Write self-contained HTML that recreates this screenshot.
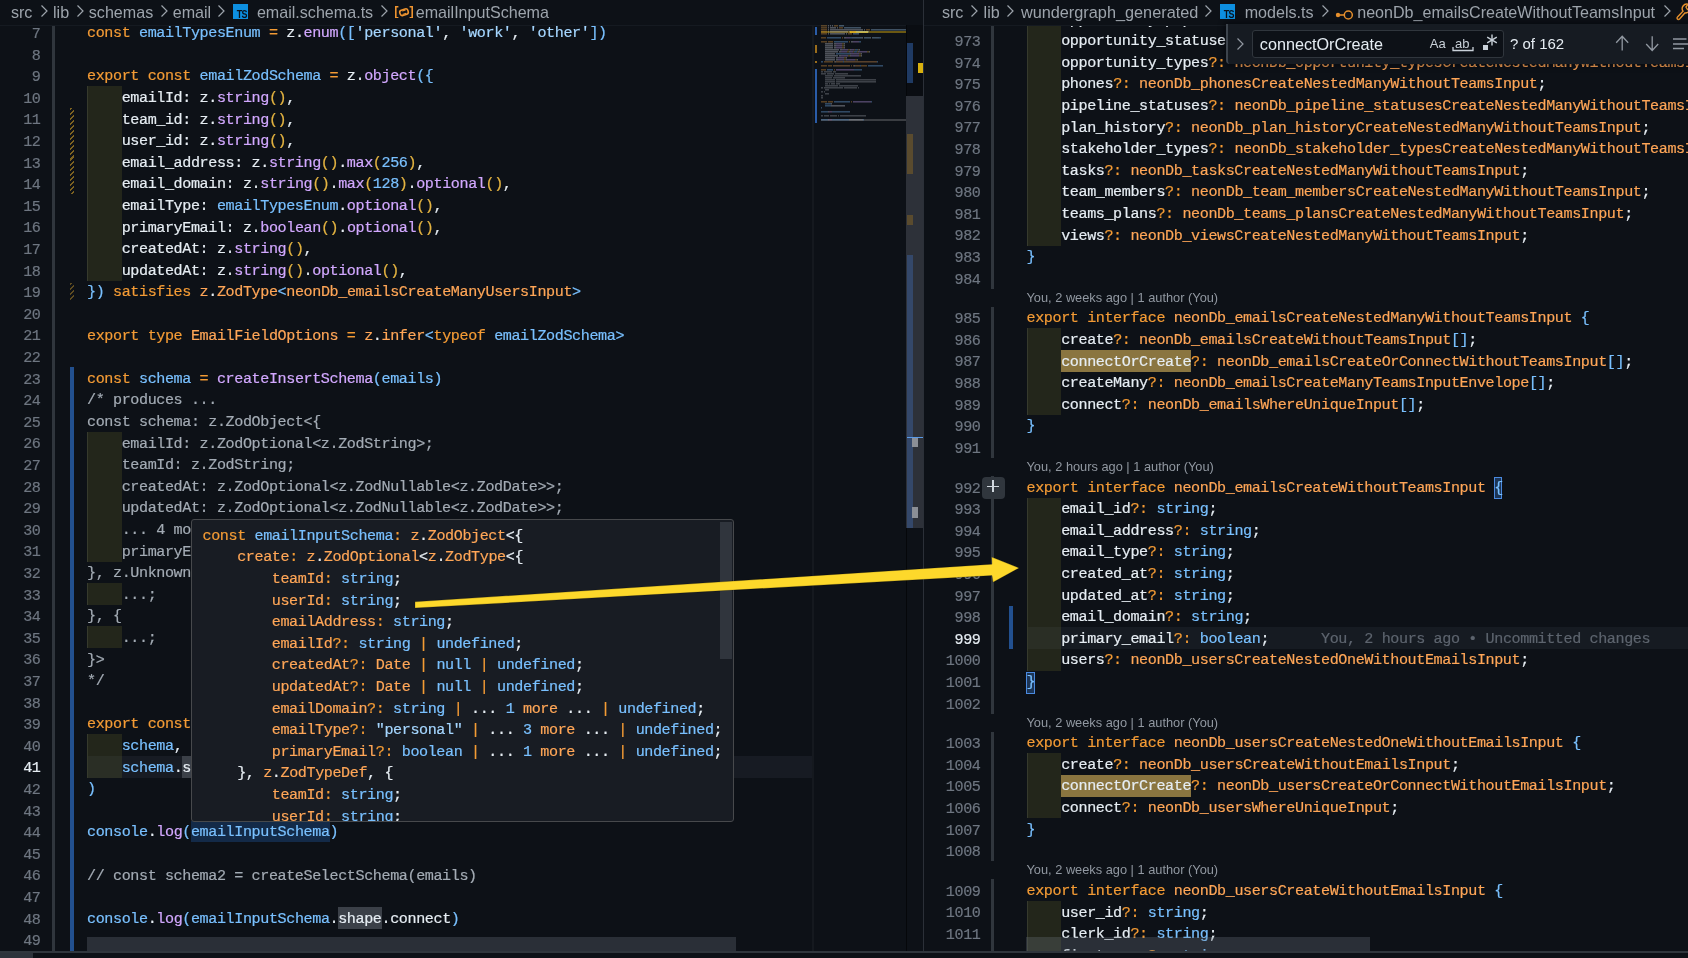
<!DOCTYPE html><html><head><meta charset="utf-8"><style>
*{margin:0;padding:0;box-sizing:border-box}
html,body{width:1688px;height:958px;overflow:hidden;background:#0d1117}
body{position:relative;font-family:"Liberation Mono",monospace}
.ln{position:absolute;white-space:pre;font-family:"Liberation Mono",monospace;font-size:15.1px;letter-spacing:-0.3964px;line-height:21.6px;height:21.6px;-webkit-text-stroke:0.2px currentColor}
.K{color:#f39b35} .T{color:#ffa657} .V{color:#79c0ff} .F{color:#d2a8ff}
.S{color:#a5d6ff} .Y{color:#e3b341} .D{color:#e6edf3} .C{color:#a3abb4} .G{color:#5d646e}
.bc{position:absolute;top:0;height:25px;line-height:25px;font-family:"Liberation Sans",sans-serif;font-size:16.1px;color:#9da4ac;white-space:pre}
.pane{position:absolute;overflow:hidden}
#root{position:absolute;left:0;top:0;width:1688px;height:958px;overflow:hidden;will-change:transform}
</style></head><body><div id="root">
<div class="pane" style="left:0;top:25px;width:923px;height:926px">
<div style="position:absolute;left:87.00px;top:731.00px;width:726.00px;height:21.60px;background:#171b23;"></div>
<div style="position:absolute;left:87.00px;top:61.00px;width:34.66px;height:195.00px;background:#23261b;border-left:1px solid #363a2d"></div>
<div style="position:absolute;left:87.00px;top:407.00px;width:34.66px;height:130.00px;background:#23261b;border-left:1px solid #363a2d"></div>
<div style="position:absolute;left:87.00px;top:558.00px;width:34.66px;height:22.00px;background:#23261b;border-left:1px solid #363a2d"></div>
<div style="position:absolute;left:87.00px;top:601.00px;width:34.66px;height:22.00px;background:#23261b;border-left:1px solid #363a2d"></div>
<div style="position:absolute;left:87.00px;top:709.00px;width:34.66px;height:44.00px;background:#23261b;border-left:1px solid #363a2d"></div>
<div style="position:absolute;left:88.00px;top:731.00px;width:33.66px;height:22.00px;background:rgba(110,118,129,0.10);"></div>
<div style="position:absolute;left:190.98px;top:795.80px;width:138.64px;height:21.60px;background:#132a48;"></div>
<div style="position:absolute;left:338.28px;top:882.20px;width:43.32px;height:21.60px;background:#3b4048;"></div>
<div style="position:absolute;left:182.31px;top:731.00px;width:8.66px;height:21.60px;background:#3b4048;"></div>
<div style="position:absolute;left:52.00px;top:0.00px;width:3.00px;height:926.00px;background:#30363d;"></div>
<div style="position:absolute;left:812.00px;top:0.00px;width:2.00px;height:926.00px;background:#15191f;"></div>
<div style="position:absolute;left:70px;top:83.00px;width:4px;height:86.40px;background:repeating-linear-gradient(135deg,#7d6220 0 1.5px,transparent 1.5px 3.6px)"></div>
<div style="position:absolute;left:70px;top:257.80px;width:4px;height:17.60px;background:repeating-linear-gradient(135deg,#5f4c20 0 1.5px,transparent 1.5px 3.6px)"></div>
<div style="position:absolute;left:70.00px;top:342.20px;width:4.00px;height:583.80px;background:#22508f;"></div>
<div class="ln" style="left:-19.50px;width:60px;text-align:right;top:-1.00px;color:#6e7681">7</div>
<div class="ln" style="left:87.00px;top:-1.90px;"><span class="K">const </span><span class="V">emailTypesEnum </span><span class="K">= </span><span class="D">z.</span><span class="F">enum</span><span class="V">([</span><span class="S">&#x27;personal&#x27;</span><span class="D">, </span><span class="S">&#x27;work&#x27;</span><span class="D">, </span><span class="S">&#x27;other&#x27;</span><span class="V">])</span></div>
<div class="ln" style="left:-19.50px;width:60px;text-align:right;top:20.60px;color:#6e7681">8</div>
<div class="ln" style="left:87.00px;top:19.70px;"></div>
<div class="ln" style="left:-19.50px;width:60px;text-align:right;top:42.20px;color:#6e7681">9</div>
<div class="ln" style="left:87.00px;top:41.30px;"><span class="K">export const </span><span class="V">emailZodSchema </span><span class="K">= </span><span class="D">z.</span><span class="F">object</span><span class="V">({</span></div>
<div class="ln" style="left:-19.50px;width:60px;text-align:right;top:63.80px;color:#6e7681">10</div>
<div class="ln" style="left:87.00px;top:62.90px;"><span class="D">    emailId: z.</span><span class="F">string</span><span class="Y">()</span><span class="D">,</span></div>
<div class="ln" style="left:-19.50px;width:60px;text-align:right;top:85.40px;color:#6e7681">11</div>
<div class="ln" style="left:87.00px;top:84.50px;"><span class="D">    team_id: z.</span><span class="F">string</span><span class="Y">()</span><span class="D">,</span></div>
<div class="ln" style="left:-19.50px;width:60px;text-align:right;top:107.00px;color:#6e7681">12</div>
<div class="ln" style="left:87.00px;top:106.10px;"><span class="D">    user_id: z.</span><span class="F">string</span><span class="Y">()</span><span class="D">,</span></div>
<div class="ln" style="left:-19.50px;width:60px;text-align:right;top:128.60px;color:#6e7681">13</div>
<div class="ln" style="left:87.00px;top:127.70px;"><span class="D">    email_address: z.</span><span class="F">string</span><span class="Y">()</span><span class="D">.</span><span class="F">max</span><span class="Y">(</span><span class="V">256</span><span class="Y">)</span><span class="D">,</span></div>
<div class="ln" style="left:-19.50px;width:60px;text-align:right;top:150.20px;color:#6e7681">14</div>
<div class="ln" style="left:87.00px;top:149.30px;"><span class="D">    email_domain: z.</span><span class="F">string</span><span class="Y">()</span><span class="D">.</span><span class="F">max</span><span class="Y">(</span><span class="V">128</span><span class="Y">)</span><span class="D">.</span><span class="F">optional</span><span class="Y">()</span><span class="D">,</span></div>
<div class="ln" style="left:-19.50px;width:60px;text-align:right;top:171.80px;color:#6e7681">15</div>
<div class="ln" style="left:87.00px;top:170.90px;"><span class="D">    emailType: </span><span class="V">emailTypesEnum</span><span class="D">.</span><span class="F">optional</span><span class="Y">()</span><span class="D">,</span></div>
<div class="ln" style="left:-19.50px;width:60px;text-align:right;top:193.40px;color:#6e7681">16</div>
<div class="ln" style="left:87.00px;top:192.50px;"><span class="D">    primaryEmail: z.</span><span class="F">boolean</span><span class="Y">()</span><span class="D">.</span><span class="F">optional</span><span class="Y">()</span><span class="D">,</span></div>
<div class="ln" style="left:-19.50px;width:60px;text-align:right;top:215.00px;color:#6e7681">17</div>
<div class="ln" style="left:87.00px;top:214.10px;"><span class="D">    createdAt: z.</span><span class="F">string</span><span class="Y">()</span><span class="D">,</span></div>
<div class="ln" style="left:-19.50px;width:60px;text-align:right;top:236.60px;color:#6e7681">18</div>
<div class="ln" style="left:87.00px;top:235.70px;"><span class="D">    updatedAt: z.</span><span class="F">string</span><span class="Y">()</span><span class="D">.</span><span class="F">optional</span><span class="Y">()</span><span class="D">,</span></div>
<div class="ln" style="left:-19.50px;width:60px;text-align:right;top:258.20px;color:#6e7681">19</div>
<div class="ln" style="left:87.00px;top:257.30px;"><span class="V">}) </span><span class="K">satisfies </span><span class="T">z</span><span class="D">.</span><span class="T">ZodType</span><span class="V">&lt;</span><span class="T">neonDb_emailsCreateManyUsersInput</span><span class="V">&gt;</span></div>
<div class="ln" style="left:-19.50px;width:60px;text-align:right;top:279.80px;color:#6e7681">20</div>
<div class="ln" style="left:87.00px;top:278.90px;"></div>
<div class="ln" style="left:-19.50px;width:60px;text-align:right;top:301.40px;color:#6e7681">21</div>
<div class="ln" style="left:87.00px;top:300.50px;"><span class="K">export type </span><span class="T">EmailFieldOptions </span><span class="K">= </span><span class="T">z</span><span class="D">.</span><span class="T">infer</span><span class="V">&lt;</span><span class="K">typeof </span><span class="V">emailZodSchema&gt;</span></div>
<div class="ln" style="left:-19.50px;width:60px;text-align:right;top:323.00px;color:#6e7681">22</div>
<div class="ln" style="left:87.00px;top:322.10px;"></div>
<div class="ln" style="left:-19.50px;width:60px;text-align:right;top:344.60px;color:#6e7681">23</div>
<div class="ln" style="left:87.00px;top:343.70px;"><span class="K">const </span><span class="V">schema </span><span class="K">= </span><span class="F">createInsertSchema</span><span class="V">(emails)</span></div>
<div class="ln" style="left:-19.50px;width:60px;text-align:right;top:366.20px;color:#6e7681">24</div>
<div class="ln" style="left:87.00px;top:365.30px;"><span class="C">/* produces ...</span></div>
<div class="ln" style="left:-19.50px;width:60px;text-align:right;top:387.80px;color:#6e7681">25</div>
<div class="ln" style="left:87.00px;top:386.90px;"><span class="C">const schema: z.ZodObject&lt;{</span></div>
<div class="ln" style="left:-19.50px;width:60px;text-align:right;top:409.40px;color:#6e7681">26</div>
<div class="ln" style="left:87.00px;top:408.50px;"><span class="C">    emailId: z.ZodOptional&lt;z.ZodString&gt;;</span></div>
<div class="ln" style="left:-19.50px;width:60px;text-align:right;top:431.00px;color:#6e7681">27</div>
<div class="ln" style="left:87.00px;top:430.10px;"><span class="C">    teamId: z.ZodString;</span></div>
<div class="ln" style="left:-19.50px;width:60px;text-align:right;top:452.60px;color:#6e7681">28</div>
<div class="ln" style="left:87.00px;top:451.70px;"><span class="C">    createdAt: z.ZodOptional&lt;z.ZodNullable&lt;z.ZodDate&gt;&gt;;</span></div>
<div class="ln" style="left:-19.50px;width:60px;text-align:right;top:474.20px;color:#6e7681">29</div>
<div class="ln" style="left:87.00px;top:473.30px;"><span class="C">    updatedAt: z.ZodOptional&lt;z.ZodNullable&lt;z.ZodDate&gt;&gt;;</span></div>
<div class="ln" style="left:-19.50px;width:60px;text-align:right;top:495.80px;color:#6e7681">30</div>
<div class="ln" style="left:87.00px;top:494.90px;"><span class="C">    ... 4 more ...;</span></div>
<div class="ln" style="left:-19.50px;width:60px;text-align:right;top:517.40px;color:#6e7681">31</div>
<div class="ln" style="left:87.00px;top:516.50px;"><span class="C">    primaryEmail: z.ZodOptional&lt;z.ZodBoolean&gt;;</span></div>
<div class="ln" style="left:-19.50px;width:60px;text-align:right;top:539.00px;color:#6e7681">32</div>
<div class="ln" style="left:87.00px;top:538.10px;"><span class="C">}, z.UnknownKeysParam, z.ZodTypeAny, {</span></div>
<div class="ln" style="left:-19.50px;width:60px;text-align:right;top:560.60px;color:#6e7681">33</div>
<div class="ln" style="left:87.00px;top:559.70px;"><span class="C">    ...;</span></div>
<div class="ln" style="left:-19.50px;width:60px;text-align:right;top:582.20px;color:#6e7681">34</div>
<div class="ln" style="left:87.00px;top:581.30px;"><span class="C">}, {</span></div>
<div class="ln" style="left:-19.50px;width:60px;text-align:right;top:603.80px;color:#6e7681">35</div>
<div class="ln" style="left:87.00px;top:602.90px;"><span class="C">    ...;</span></div>
<div class="ln" style="left:-19.50px;width:60px;text-align:right;top:625.40px;color:#6e7681">36</div>
<div class="ln" style="left:87.00px;top:624.50px;"><span class="C">}&gt;</span></div>
<div class="ln" style="left:-19.50px;width:60px;text-align:right;top:647.00px;color:#6e7681">37</div>
<div class="ln" style="left:87.00px;top:646.10px;"><span class="C">*/</span></div>
<div class="ln" style="left:-19.50px;width:60px;text-align:right;top:668.60px;color:#6e7681">38</div>
<div class="ln" style="left:87.00px;top:667.70px;"></div>
<div class="ln" style="left:-19.50px;width:60px;text-align:right;top:690.20px;color:#6e7681">39</div>
<div class="ln" style="left:87.00px;top:689.30px;"><span class="K">export const </span><span class="V">emailInputSchema </span><span class="K">= </span><span class="F">createInsertSchema</span><span class="V">(</span></div>
<div class="ln" style="left:-19.50px;width:60px;text-align:right;top:711.80px;color:#6e7681">40</div>
<div class="ln" style="left:87.00px;top:710.90px;"><span class="D">    </span><span class="V">schema</span><span class="D">,</span></div>
<div class="ln" style="left:-19.50px;width:60px;text-align:right;top:733.40px;color:#e6edf3">41</div>
<div class="ln" style="left:87.00px;top:732.50px;"><span class="D">    </span><span class="V">schema</span><span class="D">.shape</span></div>
<div class="ln" style="left:-19.50px;width:60px;text-align:right;top:755.00px;color:#6e7681">42</div>
<div class="ln" style="left:87.00px;top:754.10px;"><span class="V">)</span></div>
<div class="ln" style="left:-19.50px;width:60px;text-align:right;top:776.60px;color:#6e7681">43</div>
<div class="ln" style="left:87.00px;top:775.70px;"></div>
<div class="ln" style="left:-19.50px;width:60px;text-align:right;top:798.20px;color:#6e7681">44</div>
<div class="ln" style="left:87.00px;top:797.30px;"><span class="V">console</span><span class="D">.</span><span class="F">log</span><span class="V">(emailInputSchema)</span></div>
<div class="ln" style="left:-19.50px;width:60px;text-align:right;top:819.80px;color:#6e7681">45</div>
<div class="ln" style="left:87.00px;top:818.90px;"></div>
<div class="ln" style="left:-19.50px;width:60px;text-align:right;top:841.40px;color:#6e7681">46</div>
<div class="ln" style="left:87.00px;top:840.50px;"><span class="C">// const schema2 = createSelectSchema(emails)</span></div>
<div class="ln" style="left:-19.50px;width:60px;text-align:right;top:863.00px;color:#6e7681">47</div>
<div class="ln" style="left:87.00px;top:862.10px;"></div>
<div class="ln" style="left:-19.50px;width:60px;text-align:right;top:884.60px;color:#6e7681">48</div>
<div class="ln" style="left:87.00px;top:883.70px;"><span class="V">console</span><span class="D">.</span><span class="F">log</span><span class="V">(emailInputSchema</span><span class="D">.shape.connect</span><span class="V">)</span></div>
<div class="ln" style="left:-19.50px;width:60px;text-align:right;top:906.20px;color:#6e7681">49</div>
<div class="ln" style="left:87.00px;top:905.30px;"></div>
<div style="position:absolute;left:87.00px;top:912.00px;width:649.00px;height:14.00px;background:rgba(110,118,129,0.3);"></div>
</div>
<div class="pane" style="left:924px;top:25px;width:764px;height:926px">
<div style="position:absolute;left:102.50px;top:602.30px;width:661.50px;height:21.60px;background:#161b22;"></div>
<div style="position:absolute;left:102.50px;top:-17.00px;width:34.66px;height:238.00px;background:#23261b;border-left:1px solid #363a2d"></div>
<div style="position:absolute;left:102.50px;top:303.00px;width:34.66px;height:87.00px;background:#23261b;border-left:1px solid #363a2d"></div>
<div style="position:absolute;left:102.50px;top:473.00px;width:34.66px;height:173.00px;background:#23261b;border-left:1px solid #363a2d"></div>
<div style="position:absolute;left:102.50px;top:728.00px;width:34.66px;height:65.00px;background:#23261b;border-left:1px solid #363a2d"></div>
<div style="position:absolute;left:102.50px;top:876.00px;width:34.66px;height:65.00px;background:#23261b;border-left:1px solid #363a2d"></div>
<div style="position:absolute;left:103.50px;top:602.00px;width:33.66px;height:22.00px;background:rgba(110,118,129,0.10);"></div>
<div style="position:absolute;left:137.16px;top:325.05px;width:129.97px;height:21.60px;background:#8a7540;"></div>
<div style="position:absolute;left:137.16px;top:749.95px;width:129.97px;height:21.60px;background:#8a7540;"></div>
<div style="position:absolute;left:569.91px;top:452.10px;width:8.5px;height:22px;border:1px solid #4a8ae0;background:#1c3556"></div>
<div style="position:absolute;left:102.00px;top:646.50px;width:8.5px;height:22px;border:1px solid #4a8ae0;background:#1c3556"></div>
<div style="position:absolute;left:67.00px;top:0.00px;width:3.00px;height:263.80px;background:#30363d;"></div>
<div style="position:absolute;left:67.00px;top:281.85px;width:3.00px;height:151.20px;background:#30363d;"></div>
<div style="position:absolute;left:67.00px;top:451.10px;width:3.00px;height:237.60px;background:#30363d;"></div>
<div style="position:absolute;left:67.00px;top:706.75px;width:3.00px;height:129.60px;background:#30363d;"></div>
<div style="position:absolute;left:67.00px;top:854.40px;width:3.00px;height:71.60px;background:#30363d;"></div>
<div style="position:absolute;left:85.00px;top:580.70px;width:4.00px;height:43.20px;background:#22508f;"></div>
<div style="position:absolute;left:58px;top:452px;width:23px;height:22px;background:#30363d;border-radius:4px"></div>
<div style="position:absolute;left:62.89999999999998px;top:460.5px;width:12.5px;height:1.4px;background:#d0d7de"></div>
<div style="position:absolute;left:68.39999999999998px;top:455px;width:1.4px;height:12.3px;background:#d0d7de"></div>
<div class="ln" style="left:-3.50px;width:60px;text-align:right;top:-14.60px;color:#6e7681">972</div>
<div class="ln" style="left:102.50px;top:-15.50px;"><span class="D">    opportunity_pipelines</span><span class="K">?: </span><span class="T">neonDb_opportunity_pipelinesCreateNestedManyWithoutTeamsInput</span><span class="D">;</span></div>
<div class="ln" style="left:-3.50px;width:60px;text-align:right;top:7.00px;color:#6e7681">973</div>
<div class="ln" style="left:102.50px;top:6.10px;"><span class="D">    opportunity_statuses</span><span class="K">?: </span><span class="T">neonDb_opportunity_statusesCreateNestedManyWithoutTeamsInput</span><span class="D">;</span></div>
<div class="ln" style="left:-3.50px;width:60px;text-align:right;top:28.60px;color:#6e7681">974</div>
<div class="ln" style="left:102.50px;top:27.70px;"><span class="D">    opportunity_types</span><span class="K">?: </span><span class="T">neonDb_opportunity_typesCreateNestedManyWithoutTeamsInput</span><span class="D">;</span></div>
<div class="ln" style="left:-3.50px;width:60px;text-align:right;top:50.20px;color:#6e7681">975</div>
<div class="ln" style="left:102.50px;top:49.30px;"><span class="D">    phones</span><span class="K">?: </span><span class="T">neonDb_phonesCreateNestedManyWithoutTeamsInput</span><span class="D">;</span></div>
<div class="ln" style="left:-3.50px;width:60px;text-align:right;top:71.80px;color:#6e7681">976</div>
<div class="ln" style="left:102.50px;top:70.90px;"><span class="D">    pipeline_statuses</span><span class="K">?: </span><span class="T">neonDb_pipeline_statusesCreateNestedManyWithoutTeamsInput</span><span class="D">;</span></div>
<div class="ln" style="left:-3.50px;width:60px;text-align:right;top:93.40px;color:#6e7681">977</div>
<div class="ln" style="left:102.50px;top:92.50px;"><span class="D">    plan_history</span><span class="K">?: </span><span class="T">neonDb_plan_historyCreateNestedManyWithoutTeamsInput</span><span class="D">;</span></div>
<div class="ln" style="left:-3.50px;width:60px;text-align:right;top:115.00px;color:#6e7681">978</div>
<div class="ln" style="left:102.50px;top:114.10px;"><span class="D">    stakeholder_types</span><span class="K">?: </span><span class="T">neonDb_stakeholder_typesCreateNestedManyWithoutTeamsInput</span><span class="D">;</span></div>
<div class="ln" style="left:-3.50px;width:60px;text-align:right;top:136.60px;color:#6e7681">979</div>
<div class="ln" style="left:102.50px;top:135.70px;"><span class="D">    tasks</span><span class="K">?: </span><span class="T">neonDb_tasksCreateNestedManyWithoutTeamsInput</span><span class="D">;</span></div>
<div class="ln" style="left:-3.50px;width:60px;text-align:right;top:158.20px;color:#6e7681">980</div>
<div class="ln" style="left:102.50px;top:157.30px;"><span class="D">    team_members</span><span class="K">?: </span><span class="T">neonDb_team_membersCreateNestedManyWithoutTeamsInput</span><span class="D">;</span></div>
<div class="ln" style="left:-3.50px;width:60px;text-align:right;top:179.80px;color:#6e7681">981</div>
<div class="ln" style="left:102.50px;top:178.90px;"><span class="D">    teams_plans</span><span class="K">?: </span><span class="T">neonDb_teams_plansCreateNestedManyWithoutTeamsInput</span><span class="D">;</span></div>
<div class="ln" style="left:-3.50px;width:60px;text-align:right;top:201.40px;color:#6e7681">982</div>
<div class="ln" style="left:102.50px;top:200.50px;"><span class="D">    views</span><span class="K">?: </span><span class="T">neonDb_viewsCreateNestedManyWithoutTeamsInput</span><span class="D">;</span></div>
<div class="ln" style="left:-3.50px;width:60px;text-align:right;top:223.00px;color:#6e7681">983</div>
<div class="ln" style="left:102.50px;top:222.10px;"><span class="V">}</span></div>
<div class="ln" style="left:-3.50px;width:60px;text-align:right;top:244.60px;color:#6e7681">984</div>
<div class="ln" style="left:102.50px;top:243.70px;"></div>
<div class="ln" style="left:-3.50px;width:60px;text-align:right;top:284.25px;color:#6e7681">985</div>
<div class="ln" style="left:102.50px;top:283.35px;"><span class="K">export interface </span><span class="T">neonDb_emailsCreateNestedManyWithoutTeamsInput </span><span class="V">{</span></div>
<div class="ln" style="left:-3.50px;width:60px;text-align:right;top:305.85px;color:#6e7681">986</div>
<div class="ln" style="left:102.50px;top:304.95px;"><span class="D">    create</span><span class="K">?: </span><span class="T">neonDb_emailsCreateWithoutTeamsInput</span><span class="V">[]</span><span class="D">;</span></div>
<div class="ln" style="left:-3.50px;width:60px;text-align:right;top:327.45px;color:#6e7681">987</div>
<div class="ln" style="left:102.50px;top:326.55px;"><span class="D">    connectOrCreate</span><span class="K">?: </span><span class="T">neonDb_emailsCreateOrConnectWithoutTeamsInput</span><span class="V">[]</span><span class="D">;</span></div>
<div class="ln" style="left:-3.50px;width:60px;text-align:right;top:349.05px;color:#6e7681">988</div>
<div class="ln" style="left:102.50px;top:348.15px;"><span class="D">    createMany</span><span class="K">?: </span><span class="T">neonDb_emailsCreateManyTeamsInputEnvelope</span><span class="V">[]</span><span class="D">;</span></div>
<div class="ln" style="left:-3.50px;width:60px;text-align:right;top:370.65px;color:#6e7681">989</div>
<div class="ln" style="left:102.50px;top:369.75px;"><span class="D">    connect</span><span class="K">?: </span><span class="T">neonDb_emailsWhereUniqueInput</span><span class="V">[]</span><span class="D">;</span></div>
<div class="ln" style="left:-3.50px;width:60px;text-align:right;top:392.25px;color:#6e7681">990</div>
<div class="ln" style="left:102.50px;top:391.35px;"><span class="V">}</span></div>
<div class="ln" style="left:-3.50px;width:60px;text-align:right;top:413.85px;color:#6e7681">991</div>
<div class="ln" style="left:102.50px;top:412.95px;"></div>
<div class="ln" style="left:-3.50px;width:60px;text-align:right;top:453.50px;color:#6e7681">992</div>
<div class="ln" style="left:102.50px;top:452.60px;"><span class="K">export interface </span><span class="T">neonDb_emailsCreateWithoutTeamsInput </span><span class="V">{</span></div>
<div class="ln" style="left:-3.50px;width:60px;text-align:right;top:475.10px;color:#6e7681">993</div>
<div class="ln" style="left:102.50px;top:474.20px;"><span class="D">    email_id</span><span class="K">?: </span><span class="V">string</span><span class="D">;</span></div>
<div class="ln" style="left:-3.50px;width:60px;text-align:right;top:496.70px;color:#6e7681">994</div>
<div class="ln" style="left:102.50px;top:495.80px;"><span class="D">    email_address</span><span class="K">?: </span><span class="V">string</span><span class="D">;</span></div>
<div class="ln" style="left:-3.50px;width:60px;text-align:right;top:518.30px;color:#6e7681">995</div>
<div class="ln" style="left:102.50px;top:517.40px;"><span class="D">    email_type</span><span class="K">?: </span><span class="V">string</span><span class="D">;</span></div>
<div class="ln" style="left:-3.50px;width:60px;text-align:right;top:539.90px;color:#6e7681">996</div>
<div class="ln" style="left:102.50px;top:539.00px;"><span class="D">    created_at</span><span class="K">?: </span><span class="V">string</span><span class="D">;</span></div>
<div class="ln" style="left:-3.50px;width:60px;text-align:right;top:561.50px;color:#6e7681">997</div>
<div class="ln" style="left:102.50px;top:560.60px;"><span class="D">    updated_at</span><span class="K">?: </span><span class="V">string</span><span class="D">;</span></div>
<div class="ln" style="left:-3.50px;width:60px;text-align:right;top:583.10px;color:#6e7681">998</div>
<div class="ln" style="left:102.50px;top:582.20px;"><span class="D">    email_domain</span><span class="K">?: </span><span class="V">string</span><span class="D">;</span></div>
<div class="ln" style="left:-3.50px;width:60px;text-align:right;top:604.70px;color:#e6edf3">999</div>
<div class="ln" style="left:102.50px;top:603.80px;"><span class="D">    primary_email</span><span class="K">?: </span><span class="V">boolean</span><span class="D">;      </span><span class="G">You, 2 hours ago • Uncommitted changes</span></div>
<div class="ln" style="left:-3.50px;width:60px;text-align:right;top:626.30px;color:#6e7681">1000</div>
<div class="ln" style="left:102.50px;top:625.40px;"><span class="D">    users</span><span class="K">?: </span><span class="T">neonDb_usersCreateNestedOneWithoutEmailsInput</span><span class="D">;</span></div>
<div class="ln" style="left:-3.50px;width:60px;text-align:right;top:647.90px;color:#6e7681">1001</div>
<div class="ln" style="left:102.50px;top:647.00px;"><span class="V">}</span></div>
<div class="ln" style="left:-3.50px;width:60px;text-align:right;top:669.50px;color:#6e7681">1002</div>
<div class="ln" style="left:102.50px;top:668.60px;"></div>
<div class="ln" style="left:-3.50px;width:60px;text-align:right;top:709.15px;color:#6e7681">1003</div>
<div class="ln" style="left:102.50px;top:708.25px;"><span class="K">export interface </span><span class="T">neonDb_usersCreateNestedOneWithoutEmailsInput </span><span class="V">{</span></div>
<div class="ln" style="left:-3.50px;width:60px;text-align:right;top:730.75px;color:#6e7681">1004</div>
<div class="ln" style="left:102.50px;top:729.85px;"><span class="D">    create</span><span class="K">?: </span><span class="T">neonDb_usersCreateWithoutEmailsInput</span><span class="D">;</span></div>
<div class="ln" style="left:-3.50px;width:60px;text-align:right;top:752.35px;color:#6e7681">1005</div>
<div class="ln" style="left:102.50px;top:751.45px;"><span class="D">    connectOrCreate</span><span class="K">?: </span><span class="T">neonDb_usersCreateOrConnectWithoutEmailsInput</span><span class="D">;</span></div>
<div class="ln" style="left:-3.50px;width:60px;text-align:right;top:773.95px;color:#6e7681">1006</div>
<div class="ln" style="left:102.50px;top:773.05px;"><span class="D">    connect</span><span class="K">?: </span><span class="T">neonDb_usersWhereUniqueInput</span><span class="D">;</span></div>
<div class="ln" style="left:-3.50px;width:60px;text-align:right;top:795.55px;color:#6e7681">1007</div>
<div class="ln" style="left:102.50px;top:794.65px;"><span class="V">}</span></div>
<div class="ln" style="left:-3.50px;width:60px;text-align:right;top:817.15px;color:#6e7681">1008</div>
<div class="ln" style="left:102.50px;top:816.25px;"></div>
<div class="ln" style="left:-3.50px;width:60px;text-align:right;top:856.80px;color:#6e7681">1009</div>
<div class="ln" style="left:102.50px;top:855.90px;"><span class="K">export interface </span><span class="T">neonDb_usersCreateWithoutEmailsInput </span><span class="V">{</span></div>
<div class="ln" style="left:-3.50px;width:60px;text-align:right;top:878.40px;color:#6e7681">1010</div>
<div class="ln" style="left:102.50px;top:877.50px;"><span class="D">    user_id</span><span class="K">?: </span><span class="V">string</span><span class="D">;</span></div>
<div class="ln" style="left:-3.50px;width:60px;text-align:right;top:900.00px;color:#6e7681">1011</div>
<div class="ln" style="left:102.50px;top:899.10px;"><span class="D">    clerk_id</span><span class="K">?: </span><span class="V">string</span><span class="D">;</span></div>
<div class="ln" style="left:-3.50px;width:60px;text-align:right;top:921.60px;color:#6e7681">1012</div>
<div class="ln" style="left:102.50px;top:920.70px;"><span class="D">    first_name</span><span class="K">?: </span><span class="V">string</span><span class="D">;</span></div>
<div style="position:absolute;left:102.50px;top:263.80px;height:18.05px;line-height:18.05px;font-family:'Liberation Sans',sans-serif;font-size:12.8px;color:#9198a1;white-space:pre">You, 2 weeks ago | 1 author (You)</div>
<div style="position:absolute;left:102.50px;top:433.05px;height:18.05px;line-height:18.05px;font-family:'Liberation Sans',sans-serif;font-size:12.8px;color:#9198a1;white-space:pre">You, 2 hours ago | 1 author (You)</div>
<div style="position:absolute;left:102.50px;top:688.70px;height:18.05px;line-height:18.05px;font-family:'Liberation Sans',sans-serif;font-size:12.8px;color:#9198a1;white-space:pre">You, 2 weeks ago | 1 author (You)</div>
<div style="position:absolute;left:102.50px;top:836.35px;height:18.05px;line-height:18.05px;font-family:'Liberation Sans',sans-serif;font-size:12.8px;color:#9198a1;white-space:pre">You, 2 weeks ago | 1 author (You)</div>
<div style="position:absolute;left:102.00px;top:912.00px;width:344.00px;height:14.00px;background:rgba(110,118,129,0.3);"></div>
</div>
<div style="position:absolute;left:923.00px;top:0.00px;width:1.00px;height:958.00px;background:#2b3038;"></div>
<div class="bc" style="left:10.899999999999999px;">src</div>
<svg style="position:absolute;left:39.5px;top:4.4px" width="9" height="14" viewBox="0 0 9 14"><path d="M1.5 1.5 L7 7 L1.5 12.5" fill="none" stroke="#9da4ac" stroke-width="1.2"/></svg>
<div class="bc" style="left:53.0px;">lib</div>
<svg style="position:absolute;left:75.8px;top:4.4px" width="9" height="14" viewBox="0 0 9 14"><path d="M1.5 1.5 L7 7 L1.5 12.5" fill="none" stroke="#9da4ac" stroke-width="1.2"/></svg>
<div class="bc" style="left:88.8px;">schemas</div>
<svg style="position:absolute;left:159.7px;top:4.4px" width="9" height="14" viewBox="0 0 9 14"><path d="M1.5 1.5 L7 7 L1.5 12.5" fill="none" stroke="#9da4ac" stroke-width="1.2"/></svg>
<div class="bc" style="left:172.7px;">email</div>
<svg style="position:absolute;left:217px;top:4.4px" width="9" height="14" viewBox="0 0 9 14"><path d="M1.5 1.5 L7 7 L1.5 12.5" fill="none" stroke="#9da4ac" stroke-width="1.2"/></svg>
<div style="position:absolute;left:233px;top:4px;width:15px;height:15px;background:#0d8fe0"><div style="position:absolute;right:1px;bottom:0px;font-family:'Liberation Sans',sans-serif;font-weight:bold;font-size:10.5px;line-height:10px;color:#08121c;letter-spacing:-0.8px;transform:scaleX(0.85);transform-origin:right bottom">TS</div></div>
<div class="bc" style="left:256.9px;">email.schema.ts</div>
<svg style="position:absolute;left:380px;top:4.4px" width="9" height="14" viewBox="0 0 9 14"><path d="M1.5 1.5 L7 7 L1.5 12.5" fill="none" stroke="#9da4ac" stroke-width="1.2"/></svg>
<svg style="position:absolute;left:394.5px;top:5.8px" width="18" height="12.5" viewBox="0 0 18 12.5"><g fill="none" stroke="#ee9430" stroke-width="1.6"><path d="M3.4 0.8 H0.8 V11.7 H3.4 M14.6 0.8 H17.2 V11.7 H14.6"/><rect x="4.8" y="3.4" width="8.4" height="5.6" rx="2.2" transform="rotate(-18 9 6.2)"/><path d="M7.2 5 L10.6 4 M7.6 8.4 L11.2 7.2" stroke-width="1.1"/></g></svg>
<div class="bc" style="left:415.7px;">emailInputSchema</div>
<div class="bc" style="left:941.9000000000001px;">src</div>
<svg style="position:absolute;left:969.7px;top:4.4px" width="9" height="14" viewBox="0 0 9 14"><path d="M1.5 1.5 L7 7 L1.5 12.5" fill="none" stroke="#9da4ac" stroke-width="1.2"/></svg>
<div class="bc" style="left:983.6px;">lib</div>
<svg style="position:absolute;left:1006px;top:4.4px" width="9" height="14" viewBox="0 0 9 14"><path d="M1.5 1.5 L7 7 L1.5 12.5" fill="none" stroke="#9da4ac" stroke-width="1.2"/></svg>
<div class="bc" style="left:1020.9px;font-size:16.3px">wundergraph_generated</div>
<svg style="position:absolute;left:1204px;top:4.4px" width="9" height="14" viewBox="0 0 9 14"><path d="M1.5 1.5 L7 7 L1.5 12.5" fill="none" stroke="#9da4ac" stroke-width="1.2"/></svg>
<div style="position:absolute;left:1220px;top:4px;width:15px;height:15px;background:#0d8fe0"><div style="position:absolute;right:1px;bottom:0px;font-family:'Liberation Sans',sans-serif;font-weight:bold;font-size:10.5px;line-height:10px;color:#08121c;letter-spacing:-0.8px;transform:scaleX(0.85);transform-origin:right bottom">TS</div></div>
<div class="bc" style="left:1244.7px;">models.ts</div>
<svg style="position:absolute;left:1321px;top:4.4px" width="9" height="14" viewBox="0 0 9 14"><path d="M1.5 1.5 L7 7 L1.5 12.5" fill="none" stroke="#9da4ac" stroke-width="1.2"/></svg>
<svg style="position:absolute;left:1335px;top:4px" width="19" height="16" viewBox="0 0 19 16"><circle cx="3" cy="11" r="2.2" fill="#e8912d"/><path d="M5 11 H9" stroke="#e8912d" stroke-width="1.5"/><circle cx="13.3" cy="11" r="4" fill="none" stroke="#e8912d" stroke-width="1.5"/></svg>
<div class="bc" style="left:1357.2px;">neonDb_emailsCreateWithoutTeamsInput</div>
<svg style="position:absolute;left:1663px;top:4.4px" width="9" height="14" viewBox="0 0 9 14"><path d="M1.5 1.5 L7 7 L1.5 12.5" fill="none" stroke="#9da4ac" stroke-width="1.2"/></svg>
<svg style="position:absolute;left:1676px;top:2px" width="14" height="20" viewBox="0 0 14 20"><path d="M2.5 17.5 a1.4 1.4 0 0 1 -1 -2.4 L7 9.2 A4.6 4.6 0 0 1 12 2.2 L10 5 L11.5 7.5 L14 7 A4.6 4.6 0 0 1 8.8 11 L3.6 17 a1.4 1.4 0 0 1 -1.1 .5 Z" fill="none" stroke="#e8912d" stroke-width="1.4"/></svg>
<div style="position:absolute;left:0.00px;top:25.00px;width:923.00px;height:1.00px;background:#151a21;"></div>
<div style="position:absolute;left:924.00px;top:25.00px;width:764.00px;height:1.00px;background:#151a21;"></div>
<svg style="position:absolute;left:813px;top:25px" width="93" height="100" viewBox="0 0 93 100"><rect x="8" y="6" width="85" height="2" fill="#6b5812"/><rect x="37" y="6" width="18" height="2" fill="#d7b11a"/><rect x="8" y="94" width="85" height="2" fill="#3a3d42"/><rect x="8" y="0.3" width="6" height="1.1" fill="#c98a3a" opacity="0.55"/><rect x="15" y="0.3" width="1" height="1.1" fill="#b9c0c8" opacity="0.55"/><rect x="17" y="0.3" width="1" height="1.1" fill="#b9c0c8" opacity="0.55"/><rect x="19" y="0.3" width="1" height="1.1" fill="#b9c0c8" opacity="0.55"/><rect x="21" y="0.3" width="4" height="1.1" fill="#c98a3a" opacity="0.55"/><rect x="26" y="0.3" width="5" height="1.1" fill="#8fb8dc" opacity="0.55"/><rect x="8" y="2.3" width="6" height="1.1" fill="#c98a3a" opacity="0.55"/><rect x="15" y="2.3" width="1" height="1.1" fill="#b9c0c8" opacity="0.55"/><rect x="17" y="2.3" width="6" height="1.1" fill="#b9c0c8" opacity="0.55"/><rect x="24" y="2.3" width="1" height="1.1" fill="#b9c0c8" opacity="0.55"/><rect x="26" y="2.3" width="4" height="1.1" fill="#c98a3a" opacity="0.55"/><rect x="31" y="2.3" width="17" height="1.1" fill="#8fb8dc" opacity="0.55"/><rect x="8" y="4.3" width="6" height="1.1" fill="#c98a3a" opacity="0.55"/><rect x="15" y="4.3" width="1" height="1.1" fill="#b9c0c8" opacity="0.55"/><rect x="17" y="4.3" width="33" height="1.1" fill="#b9c0c8" opacity="0.55"/><rect x="51" y="4.3" width="1" height="1.1" fill="#b9c0c8" opacity="0.55"/><rect x="53" y="4.3" width="4" height="1.1" fill="#c98a3a" opacity="0.55"/><rect x="58" y="4.3" width="35" height="1.1" fill="#8fb8dc" opacity="0.55"/><rect x="8" y="6.3" width="6" height="1.1" fill="#c98a3a" opacity="0.55"/><rect x="15" y="6.3" width="1" height="1.1" fill="#b9c0c8" opacity="0.55"/><rect x="17" y="6.3" width="18" height="1.1" fill="#b9c0c8" opacity="0.55"/><rect x="36" y="6.3" width="1" height="1.1" fill="#b9c0c8" opacity="0.55"/><rect x="38" y="6.3" width="4" height="1.1" fill="#c98a3a" opacity="0.55"/><rect x="43" y="6.3" width="13" height="1.1" fill="#8fb8dc" opacity="0.55"/><rect x="8" y="8.3" width="6" height="1.1" fill="#c98a3a" opacity="0.55"/><rect x="15" y="8.3" width="1" height="1.1" fill="#b9c0c8" opacity="0.55"/><rect x="17" y="8.3" width="15" height="1.1" fill="#b9c0c8" opacity="0.55"/><rect x="33" y="8.3" width="1" height="1.1" fill="#b9c0c8" opacity="0.55"/><rect x="35" y="8.3" width="4" height="1.1" fill="#c98a3a" opacity="0.55"/><rect x="40" y="8.3" width="6" height="1.1" fill="#8fb8dc" opacity="0.55"/><rect x="8" y="12.3" width="5" height="1.1" fill="#c98a3a" opacity="0.55"/><rect x="14" y="12.3" width="14" height="1.1" fill="#6aa6e0" opacity="0.55"/><rect x="29" y="12.3" width="1" height="1.1" fill="#c98a3a" opacity="0.55"/><rect x="31" y="12.3" width="2" height="1.1" fill="#b9c0c8" opacity="0.55"/><rect x="33" y="12.3" width="4" height="1.1" fill="#b294dc" opacity="0.55"/><rect x="37" y="12.3" width="2" height="1.1" fill="#6aa6e0" opacity="0.55"/><rect x="39" y="12.3" width="10" height="1.1" fill="#8fb8dc" opacity="0.55"/><rect x="49" y="12.3" width="1" height="1.1" fill="#b9c0c8" opacity="0.55"/><rect x="51" y="12.3" width="6" height="1.1" fill="#8fb8dc" opacity="0.55"/><rect x="57" y="12.3" width="1" height="1.1" fill="#b9c0c8" opacity="0.55"/><rect x="59" y="12.3" width="7" height="1.1" fill="#8fb8dc" opacity="0.55"/><rect x="66" y="12.3" width="2" height="1.1" fill="#6aa6e0" opacity="0.55"/><rect x="8" y="16.3" width="6" height="1.1" fill="#c98a3a" opacity="0.55"/><rect x="15" y="16.3" width="5" height="1.1" fill="#c98a3a" opacity="0.55"/><rect x="21" y="16.3" width="14" height="1.1" fill="#6aa6e0" opacity="0.55"/><rect x="36" y="16.3" width="1" height="1.1" fill="#c98a3a" opacity="0.55"/><rect x="38" y="16.3" width="2" height="1.1" fill="#b9c0c8" opacity="0.55"/><rect x="40" y="16.3" width="6" height="1.1" fill="#b294dc" opacity="0.55"/><rect x="46" y="16.3" width="2" height="1.1" fill="#6aa6e0" opacity="0.55"/><rect x="12" y="18.3" width="8" height="1.1" fill="#b9c0c8" opacity="0.55"/><rect x="21" y="18.3" width="2" height="1.1" fill="#b9c0c8" opacity="0.55"/><rect x="23" y="18.3" width="6" height="1.1" fill="#b294dc" opacity="0.55"/><rect x="29" y="18.3" width="2" height="1.1" fill="#b89640" opacity="0.55"/><rect x="31" y="18.3" width="1" height="1.1" fill="#b9c0c8" opacity="0.55"/><rect x="12" y="20.3" width="8" height="1.1" fill="#b9c0c8" opacity="0.55"/><rect x="21" y="20.3" width="2" height="1.1" fill="#b9c0c8" opacity="0.55"/><rect x="23" y="20.3" width="6" height="1.1" fill="#b294dc" opacity="0.55"/><rect x="29" y="20.3" width="2" height="1.1" fill="#b89640" opacity="0.55"/><rect x="31" y="20.3" width="1" height="1.1" fill="#b9c0c8" opacity="0.55"/><rect x="12" y="22.3" width="8" height="1.1" fill="#b9c0c8" opacity="0.55"/><rect x="21" y="22.3" width="2" height="1.1" fill="#b9c0c8" opacity="0.55"/><rect x="23" y="22.3" width="6" height="1.1" fill="#b294dc" opacity="0.55"/><rect x="29" y="22.3" width="2" height="1.1" fill="#b89640" opacity="0.55"/><rect x="31" y="22.3" width="1" height="1.1" fill="#b9c0c8" opacity="0.55"/><rect x="12" y="24.3" width="14" height="1.1" fill="#b9c0c8" opacity="0.55"/><rect x="27" y="24.3" width="2" height="1.1" fill="#b9c0c8" opacity="0.55"/><rect x="29" y="24.3" width="6" height="1.1" fill="#b294dc" opacity="0.55"/><rect x="35" y="24.3" width="2" height="1.1" fill="#b89640" opacity="0.55"/><rect x="37" y="24.3" width="1" height="1.1" fill="#b9c0c8" opacity="0.55"/><rect x="38" y="24.3" width="3" height="1.1" fill="#b294dc" opacity="0.55"/><rect x="41" y="24.3" width="1" height="1.1" fill="#b89640" opacity="0.55"/><rect x="42" y="24.3" width="3" height="1.1" fill="#6aa6e0" opacity="0.55"/><rect x="45" y="24.3" width="1" height="1.1" fill="#b89640" opacity="0.55"/><rect x="46" y="24.3" width="1" height="1.1" fill="#b9c0c8" opacity="0.55"/><rect x="12" y="26.3" width="13" height="1.1" fill="#b9c0c8" opacity="0.55"/><rect x="26" y="26.3" width="2" height="1.1" fill="#b9c0c8" opacity="0.55"/><rect x="28" y="26.3" width="6" height="1.1" fill="#b294dc" opacity="0.55"/><rect x="34" y="26.3" width="2" height="1.1" fill="#b89640" opacity="0.55"/><rect x="36" y="26.3" width="1" height="1.1" fill="#b9c0c8" opacity="0.55"/><rect x="37" y="26.3" width="3" height="1.1" fill="#b294dc" opacity="0.55"/><rect x="40" y="26.3" width="1" height="1.1" fill="#b89640" opacity="0.55"/><rect x="41" y="26.3" width="3" height="1.1" fill="#6aa6e0" opacity="0.55"/><rect x="44" y="26.3" width="1" height="1.1" fill="#b89640" opacity="0.55"/><rect x="45" y="26.3" width="1" height="1.1" fill="#b9c0c8" opacity="0.55"/><rect x="46" y="26.3" width="8" height="1.1" fill="#b294dc" opacity="0.55"/><rect x="54" y="26.3" width="2" height="1.1" fill="#b89640" opacity="0.55"/><rect x="56" y="26.3" width="1" height="1.1" fill="#b9c0c8" opacity="0.55"/><rect x="12" y="28.3" width="10" height="1.1" fill="#b9c0c8" opacity="0.55"/><rect x="23" y="28.3" width="14" height="1.1" fill="#6aa6e0" opacity="0.55"/><rect x="37" y="28.3" width="1" height="1.1" fill="#b9c0c8" opacity="0.55"/><rect x="38" y="28.3" width="8" height="1.1" fill="#b294dc" opacity="0.55"/><rect x="46" y="28.3" width="2" height="1.1" fill="#b89640" opacity="0.55"/><rect x="48" y="28.3" width="1" height="1.1" fill="#b9c0c8" opacity="0.55"/><rect x="12" y="30.3" width="13" height="1.1" fill="#b9c0c8" opacity="0.55"/><rect x="26" y="30.3" width="2" height="1.1" fill="#b9c0c8" opacity="0.55"/><rect x="28" y="30.3" width="7" height="1.1" fill="#b294dc" opacity="0.55"/><rect x="35" y="30.3" width="2" height="1.1" fill="#b89640" opacity="0.55"/><rect x="37" y="30.3" width="1" height="1.1" fill="#b9c0c8" opacity="0.55"/><rect x="38" y="30.3" width="8" height="1.1" fill="#b294dc" opacity="0.55"/><rect x="46" y="30.3" width="2" height="1.1" fill="#b89640" opacity="0.55"/><rect x="48" y="30.3" width="1" height="1.1" fill="#b9c0c8" opacity="0.55"/><rect x="12" y="32.3" width="10" height="1.1" fill="#b9c0c8" opacity="0.55"/><rect x="23" y="32.3" width="2" height="1.1" fill="#b9c0c8" opacity="0.55"/><rect x="25" y="32.3" width="6" height="1.1" fill="#b294dc" opacity="0.55"/><rect x="31" y="32.3" width="2" height="1.1" fill="#b89640" opacity="0.55"/><rect x="33" y="32.3" width="1" height="1.1" fill="#b9c0c8" opacity="0.55"/><rect x="12" y="34.3" width="10" height="1.1" fill="#b9c0c8" opacity="0.55"/><rect x="23" y="34.3" width="2" height="1.1" fill="#b9c0c8" opacity="0.55"/><rect x="25" y="34.3" width="6" height="1.1" fill="#b294dc" opacity="0.55"/><rect x="31" y="34.3" width="2" height="1.1" fill="#b89640" opacity="0.55"/><rect x="33" y="34.3" width="1" height="1.1" fill="#b9c0c8" opacity="0.55"/><rect x="34" y="34.3" width="8" height="1.1" fill="#b294dc" opacity="0.55"/><rect x="42" y="34.3" width="2" height="1.1" fill="#b89640" opacity="0.55"/><rect x="44" y="34.3" width="1" height="1.1" fill="#b9c0c8" opacity="0.55"/><rect x="8" y="36.3" width="2" height="1.1" fill="#6aa6e0" opacity="0.55"/><rect x="11" y="36.3" width="9" height="1.1" fill="#c98a3a" opacity="0.55"/><rect x="21" y="36.3" width="1" height="1.1" fill="#d09050" opacity="0.55"/><rect x="22" y="36.3" width="1" height="1.1" fill="#b9c0c8" opacity="0.55"/><rect x="23" y="36.3" width="7" height="1.1" fill="#d09050" opacity="0.55"/><rect x="30" y="36.3" width="1" height="1.1" fill="#6aa6e0" opacity="0.55"/><rect x="31" y="36.3" width="33" height="1.1" fill="#d09050" opacity="0.55"/><rect x="64" y="36.3" width="1" height="1.1" fill="#6aa6e0" opacity="0.55"/><rect x="8" y="40.3" width="6" height="1.1" fill="#c98a3a" opacity="0.55"/><rect x="15" y="40.3" width="4" height="1.1" fill="#c98a3a" opacity="0.55"/><rect x="20" y="40.3" width="17" height="1.1" fill="#d09050" opacity="0.55"/><rect x="38" y="40.3" width="1" height="1.1" fill="#c98a3a" opacity="0.55"/><rect x="40" y="40.3" width="1" height="1.1" fill="#d09050" opacity="0.55"/><rect x="41" y="40.3" width="1" height="1.1" fill="#b9c0c8" opacity="0.55"/><rect x="42" y="40.3" width="5" height="1.1" fill="#d09050" opacity="0.55"/><rect x="47" y="40.3" width="1" height="1.1" fill="#6aa6e0" opacity="0.55"/><rect x="48" y="40.3" width="6" height="1.1" fill="#c98a3a" opacity="0.55"/><rect x="55" y="40.3" width="15" height="1.1" fill="#6aa6e0" opacity="0.55"/><rect x="8" y="44.3" width="5" height="1.1" fill="#c98a3a" opacity="0.55"/><rect x="14" y="44.3" width="6" height="1.1" fill="#6aa6e0" opacity="0.55"/><rect x="21" y="44.3" width="1" height="1.1" fill="#c98a3a" opacity="0.55"/><rect x="23" y="44.3" width="18" height="1.1" fill="#b294dc" opacity="0.55"/><rect x="41" y="44.3" width="8" height="1.1" fill="#6aa6e0" opacity="0.55"/><rect x="8" y="46.3" width="2" height="1.1" fill="#8a9098" opacity="0.55"/><rect x="11" y="46.3" width="8" height="1.1" fill="#8a9098" opacity="0.55"/><rect x="20" y="46.3" width="3" height="1.1" fill="#8a9098" opacity="0.55"/><rect x="8" y="48.3" width="5" height="1.1" fill="#8a9098" opacity="0.55"/><rect x="14" y="48.3" width="7" height="1.1" fill="#8a9098" opacity="0.55"/><rect x="22" y="48.3" width="13" height="1.1" fill="#8a9098" opacity="0.55"/><rect x="12" y="50.3" width="8" height="1.1" fill="#8a9098" opacity="0.55"/><rect x="21" y="50.3" width="27" height="1.1" fill="#8a9098" opacity="0.55"/><rect x="12" y="52.3" width="7" height="1.1" fill="#8a9098" opacity="0.55"/><rect x="20" y="52.3" width="12" height="1.1" fill="#8a9098" opacity="0.55"/><rect x="12" y="54.3" width="10" height="1.1" fill="#8a9098" opacity="0.55"/><rect x="23" y="54.3" width="40" height="1.1" fill="#8a9098" opacity="0.55"/><rect x="12" y="56.3" width="10" height="1.1" fill="#8a9098" opacity="0.55"/><rect x="23" y="56.3" width="40" height="1.1" fill="#8a9098" opacity="0.55"/><rect x="12" y="58.3" width="3" height="1.1" fill="#8a9098" opacity="0.55"/><rect x="16" y="58.3" width="1" height="1.1" fill="#8a9098" opacity="0.55"/><rect x="18" y="58.3" width="4" height="1.1" fill="#8a9098" opacity="0.55"/><rect x="23" y="58.3" width="4" height="1.1" fill="#8a9098" opacity="0.55"/><rect x="12" y="60.3" width="13" height="1.1" fill="#8a9098" opacity="0.55"/><rect x="26" y="60.3" width="19" height="1.1" fill="#8a9098" opacity="0.55"/><rect x="8" y="62.3" width="2" height="1.1" fill="#8a9098" opacity="0.55"/><rect x="11" y="62.3" width="19" height="1.1" fill="#8a9098" opacity="0.55"/><rect x="31" y="62.3" width="13" height="1.1" fill="#8a9098" opacity="0.55"/><rect x="45" y="62.3" width="1" height="1.1" fill="#8a9098" opacity="0.55"/><rect x="12" y="64.3" width="4" height="1.1" fill="#8a9098" opacity="0.55"/><rect x="8" y="66.3" width="2" height="1.1" fill="#8a9098" opacity="0.55"/><rect x="11" y="66.3" width="1" height="1.1" fill="#8a9098" opacity="0.55"/><rect x="12" y="68.3" width="4" height="1.1" fill="#8a9098" opacity="0.55"/><rect x="8" y="70.3" width="2" height="1.1" fill="#8a9098" opacity="0.55"/><rect x="8" y="72.3" width="2" height="1.1" fill="#8a9098" opacity="0.55"/><rect x="8" y="76.3" width="6" height="1.1" fill="#c98a3a" opacity="0.55"/><rect x="15" y="76.3" width="5" height="1.1" fill="#c98a3a" opacity="0.55"/><rect x="21" y="76.3" width="16" height="1.1" fill="#6aa6e0" opacity="0.55"/><rect x="38" y="76.3" width="1" height="1.1" fill="#c98a3a" opacity="0.55"/><rect x="40" y="76.3" width="18" height="1.1" fill="#b294dc" opacity="0.55"/><rect x="58" y="76.3" width="1" height="1.1" fill="#6aa6e0" opacity="0.55"/><rect x="12" y="78.3" width="6" height="1.1" fill="#6aa6e0" opacity="0.55"/><rect x="18" y="78.3" width="1" height="1.1" fill="#b9c0c8" opacity="0.55"/><rect x="12" y="80.3" width="6" height="1.1" fill="#6aa6e0" opacity="0.55"/><rect x="18" y="80.3" width="14" height="1.1" fill="#b9c0c8" opacity="0.55"/><rect x="8" y="82.3" width="1" height="1.1" fill="#6aa6e0" opacity="0.55"/><rect x="8" y="86.3" width="7" height="1.1" fill="#6aa6e0" opacity="0.55"/><rect x="15" y="86.3" width="1" height="1.1" fill="#b9c0c8" opacity="0.55"/><rect x="16" y="86.3" width="3" height="1.1" fill="#b294dc" opacity="0.55"/><rect x="19" y="86.3" width="18" height="1.1" fill="#6aa6e0" opacity="0.55"/><rect x="8" y="90.3" width="2" height="1.1" fill="#8a9098" opacity="0.55"/><rect x="11" y="90.3" width="5" height="1.1" fill="#8a9098" opacity="0.55"/><rect x="17" y="90.3" width="7" height="1.1" fill="#8a9098" opacity="0.55"/><rect x="25" y="90.3" width="1" height="1.1" fill="#8a9098" opacity="0.55"/><rect x="27" y="90.3" width="26" height="1.1" fill="#8a9098" opacity="0.55"/><rect x="8" y="94.3" width="7" height="1.1" fill="#6aa6e0" opacity="0.55"/><rect x="15" y="94.3" width="1" height="1.1" fill="#b9c0c8" opacity="0.55"/><rect x="16" y="94.3" width="3" height="1.1" fill="#b294dc" opacity="0.55"/><rect x="19" y="94.3" width="17" height="1.1" fill="#6aa6e0" opacity="0.55"/><rect x="36" y="94.3" width="14" height="1.1" fill="#b9c0c8" opacity="0.55"/><rect x="50" y="94.3" width="1" height="1.1" fill="#6aa6e0" opacity="0.55"/><rect x="2" y="2" width="2" height="8" fill="#2a5ca8"/><rect x="2" y="20" width="2" height="8" fill="#9a6d1c"/><rect x="2" y="36" width="2" height="2" fill="#9a6d1c"/><rect x="2" y="44" width="2" height="54" fill="#2a5ca8"/></svg>
<div style="position:absolute;left:906.00px;top:25.00px;width:17.00px;height:71.00px;background:#0a0d12;"></div>
<div style="position:absolute;left:906.00px;top:25.00px;width:1.00px;height:926.00px;background:#05070a;"></div>
<div style="position:absolute;left:906.00px;top:96.00px;width:17.00px;height:432.00px;background:#2d3139;"></div>
<div style="position:absolute;left:907.00px;top:43.00px;width:5.50px;height:40.00px;background:#1f3a63;"></div>
<div style="position:absolute;left:917.50px;top:63.00px;width:5.50px;height:10.00px;background:#d9b10f;"></div>
<div style="position:absolute;left:907.00px;top:134.00px;width:6.00px;height:40.00px;background:#5a4b2e;"></div>
<div style="position:absolute;left:907.00px;top:215.00px;width:6.00px;height:10.00px;background:#5a4b2e;"></div>
<div style="position:absolute;left:907.00px;top:255.00px;width:5.50px;height:273.00px;background:#34486a;"></div>
<div style="position:absolute;left:907.00px;top:436.50px;width:16.00px;height:1.50px;background:#5a9ae6;"></div>
<div style="position:absolute;left:912.00px;top:438.00px;width:6.00px;height:9.00px;background:#8b8f96;"></div>
<div style="position:absolute;left:912.00px;top:507.00px;width:6.00px;height:11.00px;background:#8b8f96;"></div>
<div style="position:absolute;left:190.5px;top:518.5px;width:543px;height:303px;background:#181c23;border:1px solid #47494c;border-radius:3px;overflow:hidden">
<div class="ln" style="left:11.00px;top:6.20px;"><span class="K">const </span><span class="V">emailInputSchema</span><span class="K">: </span><span class="T">z</span><span class="D">.</span><span class="T">ZodObject</span><span class="D">&lt;{</span></div>
<div class="ln" style="left:11.00px;top:27.80px;"><span class="D">    </span><span class="T">create</span><span class="K">: </span><span class="T">z</span><span class="D">.</span><span class="T">ZodOptional</span><span class="D">&lt;</span><span class="T">z</span><span class="D">.</span><span class="T">ZodType</span><span class="D">&lt;{</span></div>
<div class="ln" style="left:11.00px;top:49.40px;"><span class="D">        </span><span class="T">teamId</span><span class="K">: </span><span class="V">string</span><span class="D">;</span></div>
<div class="ln" style="left:11.00px;top:71.00px;"><span class="D">        </span><span class="T">userId</span><span class="K">: </span><span class="V">string</span><span class="D">;</span></div>
<div class="ln" style="left:11.00px;top:92.60px;"><span class="D">        </span><span class="T">emailAddress</span><span class="K">: </span><span class="V">string</span><span class="D">;</span></div>
<div class="ln" style="left:11.00px;top:114.20px;"><span class="D">        </span><span class="T">emailId</span><span class="K">?: </span><span class="V">string </span><span class="K">| </span><span class="V">undefined</span><span class="D">;</span></div>
<div class="ln" style="left:11.00px;top:135.80px;"><span class="D">        </span><span class="T">createdAt</span><span class="K">?: </span><span class="T">Date </span><span class="K">| </span><span class="V">null </span><span class="K">| </span><span class="V">undefined</span><span class="D">;</span></div>
<div class="ln" style="left:11.00px;top:157.40px;"><span class="D">        </span><span class="T">updatedAt</span><span class="K">?: </span><span class="T">Date </span><span class="K">| </span><span class="V">null </span><span class="K">| </span><span class="V">undefined</span><span class="D">;</span></div>
<div class="ln" style="left:11.00px;top:179.00px;"><span class="D">        </span><span class="T">emailDomain</span><span class="K">?: </span><span class="V">string </span><span class="K">| </span><span class="D">... </span><span class="V">1 </span><span class="T">more </span><span class="D">... </span><span class="K">| </span><span class="V">undefined</span><span class="D">;</span></div>
<div class="ln" style="left:11.00px;top:200.60px;"><span class="D">        </span><span class="T">emailType</span><span class="K">?: </span><span class="S">&quot;personal&quot; </span><span class="K">| </span><span class="D">... </span><span class="V">3 </span><span class="T">more </span><span class="D">... </span><span class="K">| </span><span class="V">undefined</span><span class="D">;</span></div>
<div class="ln" style="left:11.00px;top:222.20px;"><span class="D">        </span><span class="T">primaryEmail</span><span class="K">?: </span><span class="V">boolean </span><span class="K">| </span><span class="D">... </span><span class="V">1 </span><span class="T">more </span><span class="D">... </span><span class="K">| </span><span class="V">undefined</span><span class="D">;</span></div>
<div class="ln" style="left:11.00px;top:243.80px;"><span class="D">    }, </span><span class="T">z</span><span class="D">.</span><span class="T">ZodTypeDef</span><span class="D">, {</span></div>
<div class="ln" style="left:11.00px;top:265.40px;"><span class="D">        </span><span class="T">teamId</span><span class="K">: </span><span class="V">string</span><span class="D">;</span></div>
<div class="ln" style="left:11.00px;top:287.00px;"><span class="D">        </span><span class="T">userId</span><span class="K">: </span><span class="V">string</span><span class="D">;</span></div>
<div style="position:absolute;left:528.50px;top:2.00px;width:12.00px;height:137.00px;background:rgba(110,118,129,0.28);"></div>
</div>
<div style="position:absolute;left:1225.5px;top:24px;width:470px;height:40px;background:#161b22;border-left:2px solid #3d444d;border-radius:0 0 0 4px;box-shadow:0 0 6px 1px rgba(1,4,9,0.6)"></div>
<svg style="position:absolute;left:1236px;top:37px" width="9" height="14" viewBox="0 0 9 14"><path d="M1.5 1.5 L7 7 L1.5 12.5" fill="none" stroke="#9198a1" stroke-width="1.2"/></svg>
<div style="position:absolute;left:1251.5px;top:29.8px;width:252px;height:28.5px;background:#0d1117;border:1px solid #30363d;border-radius:3px"></div>
<div style="position:absolute;left:1259.8px;top:29.8px;height:28.5px;line-height:28.5px;font-family:'Liberation Sans',sans-serif;font-size:16.2px;color:#e6edf3;white-space:pre">connectOrCreate</div>
<div style="position:absolute;left:1429.8px;top:29.8px;height:28.5px;line-height:28.5px;font-family:'Liberation Sans',sans-serif;font-size:13px;color:#c9d1d9;white-space:pre">Aa</div>
<div style="position:absolute;left:1455px;top:29.8px;height:28.5px;line-height:28.5px;font-family:'Liberation Sans',sans-serif;font-size:13px;color:#c9d1d9;white-space:pre">ab</div>
<svg style="position:absolute;left:1452px;top:47px" width="22" height="5" viewBox="0 0 22 5"><path d="M1 0 V3.5 H21 V0" fill="none" stroke="#c9d1d9" stroke-width="1.3"/></svg>
<div style="position:absolute;left:1482.50px;top:45.00px;width:5.00px;height:5.00px;background:#c9d1d9;"></div>
<svg style="position:absolute;left:1486px;top:34px" width="12" height="12" viewBox="0 0 12 12"><g stroke="#c9d1d9" stroke-width="1.4"><path d="M6 0.5 V11.5"/><path d="M1.2 3.2 L10.8 8.8"/><path d="M1.2 8.8 L10.8 3.2"/></g></svg>
<div style="position:absolute;left:1510px;top:29.8px;height:28.5px;line-height:28.5px;font-family:'Liberation Sans',sans-serif;font-size:15px;color:#e6edf3;white-space:pre">? of 162</div>
<svg style="position:absolute;left:1612px;top:32px" width="76" height="22" viewBox="0 0 76 22"><g fill="none" stroke="#9198a1" stroke-width="1.3"><path d="M10.2 4.2 V18.5 M4.2 10.7 L10.2 4.2 L16.2 10.7"/><path d="M40.2 4.2 V18.5 M34.2 12 L40.2 18.5 L46.2 12"/><path d="M61 7 H74.5 M61 12 H76 M61 16.5 H72"/></g></svg>
<svg style="position:absolute;left:0;top:0" width="1688" height="958" viewBox="0 0 1688 958"><polygon points="415,601.8 992,564.2 991.7,557.1 1019,568 993,582.2 992,575.5 415,608" fill="#fdd82b" stroke="rgba(0,0,0,0.35)" stroke-width="0.6"/></svg>
<div style="position:absolute;left:0.00px;top:951.00px;width:1688.00px;height:2.00px;background:#30363d;"></div>
<div style="position:absolute;left:0.00px;top:953.00px;width:1688.00px;height:5.00px;background:#0d1117;"></div>
<div style="position:absolute;left:0.00px;top:953.00px;width:33.00px;height:5.00px;background:#2d333b;"></div>
</div></body></html>
